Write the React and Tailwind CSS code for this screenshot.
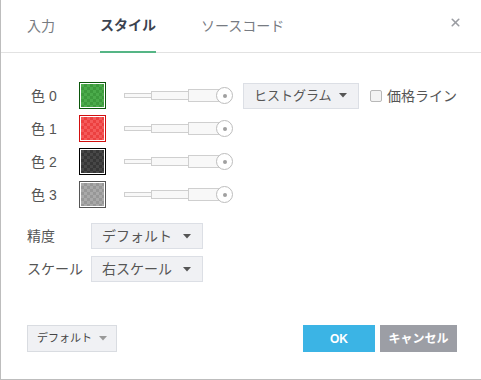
import { X } from 'lucide-react';

const swatches = [
  { label: '色 0', border: 'border-[#0b560b]', fill: 'bg-[repeating-conic-gradient(#3d9a3d_0_25%,#4bab4b_0_50%)]' },
  { label: '色 1', border: 'border-[#d20f0f]', fill: 'bg-[repeating-conic-gradient(#ec4040_0_25%,#f45a5a_0_50%)]' },
  { label: '色 2', border: 'border-[#000000]', fill: 'bg-[repeating-conic-gradient(#363636_0_25%,#474747_0_50%)]' },
  { label: '色 3', border: 'border-[#555555]', fill: 'bg-[repeating-conic-gradient(#979797_0_25%,#a9a9a9_0_50%)]' },
];

const Caret = ({ className = 'fill-[#555]' }) => (
  <svg width="8" height="5" viewBox="0 0 8 5" className={className}>
    <polygon points="0,0 8,0 4,4.5" />
  </svg>
);

const Dropdown = ({ text, width, size = 'text-[14px]' }) => (
  <div className={`${width} h-[26px] flex items-center justify-between pl-[10px] pr-[11px] bg-[#f0f1f4] border border-[#dcdfe5] ${size} text-[#555]`}>
    <span className="leading-none">{text}</span>
    <Caret />
  </div>
);

// stepped line + round handle, like the reference
const WidthSlider = () => (
  <div className="flex items-center">
    <div className="w-[28px] h-[5px] border border-[#cfcfcf] bg-[#f8f8f8]" />
    <div className="w-[38px] h-[9px] -ml-px border border-[#cfcfcf] bg-[#f8f8f8]" />
    <div className="w-[31px] h-[13px] -ml-px border border-[#cfcfcf] bg-[#f8f8f8]" />
    <div className="w-[17px] h-[17px] -ml-[3px] rounded-full border-[1.5px] border-[#bdbdbd] bg-white flex items-center justify-center">
      <div className="w-[4px] h-[4px] rounded-full bg-[#a0a0a0]" />
    </div>
  </div>
);

export default function App() {
  return (
    <div className="w-[481px] h-[380px] bg-white border-l border-b border-[#bdbdbd] flex flex-col font-['Liberation_Sans','Noto_Sans_CJK_JP',sans-serif] text-[#555]">
      {/* tabs */}
      <div className="h-[53px] flex items-stretch border-b border-[#e2e2e2] pl-[26px] text-[14px]">
        <div className="flex items-center text-[#777b82]">入力</div>
        <div className="ml-[45px] -mb-px flex items-center border-b-2 border-[#55b585] font-bold text-[#3c4350]">スタイル</div>
        <div className="ml-[45px] flex items-center text-[#777b82]">ソースコード</div>
        <div className="ml-auto mr-[19px] flex items-center pb-[7px]">
          <X size={13} strokeWidth={3} className="text-[#9a9ca2]" />
        </div>
      </div>

      {/* colours */}
      <div className="mt-[29px] pl-[30px] flex flex-col gap-[6px]">
        {swatches.map((s, i) => (
          <div key={i} className="h-[27px] flex items-center">
            <span className="w-[48px] text-[14px] leading-none">{s.label}</span>
            <div className={`w-[27px] h-[27px] border ${s.border} p-px bg-white`}>
              <div className={`w-full h-full ${s.fill} bg-[length:6px_6px]`} />
            </div>
            <div className="ml-[18px]">
              <WidthSlider />
            </div>
            {i === 0 && (
              <div className="ml-[10px] flex items-center">
                <Dropdown text="ヒストグラム" width="w-[116px]" size="text-[13px]" />
                <div className="ml-[11px] w-[12px] h-[12px] rounded-[2px] border border-[#b8b8b8] bg-[#f3f3f3]" />
                <span className="ml-[5px] text-[14px] leading-none">価格ライン</span>
              </div>
            )}
          </div>
        ))}
      </div>

      {/* precision / scale */}
      <div className="mt-[15px] pl-[26px] flex flex-col gap-[7px]">
        <div className="flex items-center">
          <span className="w-[64px] text-[14px] leading-none">精度</span>
          <Dropdown text="デフォルト" width="w-[112px]" />
        </div>
        <div className="flex items-center">
          <span className="w-[64px] text-[14px] leading-none">スケール</span>
          <Dropdown text="右スケール" width="w-[112px]" />
        </div>
      </div>

      {/* footer */}
      <div className="mt-[43px] pl-[26px] pr-[24px] flex items-center">
        <div className="w-[90px] h-[27px] flex items-center justify-between pl-[9px] pr-[9px] bg-[#f0f1f4] border border-[#d9dce1] text-[11px] text-[#444]">
          <span className="leading-none">デフォルト</span>
          <Caret className="fill-[#999]" />
        </div>
        <div className="ml-auto flex gap-[5px]">
          <button className="w-[72px] h-[27px] bg-[#3bb4e5] text-white text-[12px] font-bold leading-none">OK</button>
          <button className="w-[77px] h-[27px] bg-[#9c9ea5] text-white text-[12px] font-bold leading-none">キャンセル</button>
        </div>
      </div>
    </div>
  );
}
